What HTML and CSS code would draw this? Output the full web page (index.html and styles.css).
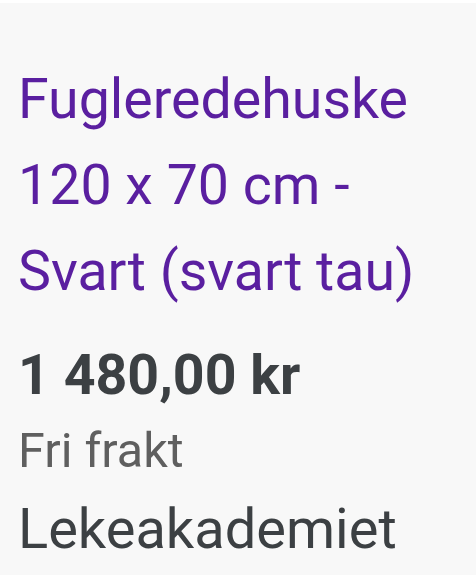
FILE: index.html
```html
<!DOCTYPE html>
<html lang="no">
<head>
  <meta charset="UTF-8" />
  <meta name="viewport" content="width=device-width, initial-scale=1.0"/>
  <title>Fugleredehuske</title>
  <link rel="stylesheet" href="styles.css">
</head>
<body>

  <div class="product-card">
    <h1 class="product-title">Fugleredehuske 120 x 70 cm - Svart (svart tau)</h1>
    <div class="product-price">1 480,00 kr</div>
    <div class="product-shipping">Fri frakt</div>
    <div class="product-seller">Lekeakademiet</div>
  </div>

</body>
</html>
```

FILE: styles.css
```css
body {
  font-family: Roboto, "Noto Sans", sans-serif;
  background: #f8f8f8;
  margin: 0;
  border-top: 3px solid #ffffff;
}

.product-card {
  padding: 54px 18px 0 18px;
}

.product-title {
  margin: 0;
  font-size: 55.5px;
  font-weight: 400;
  line-height: 86px;
  color: #5a1fa0;
}

.product-price {
  margin-top: 26px;
  font-size: 55.5px;
  font-weight: 700;
  line-height: 70px;
  color: #3c4043;
}

.product-shipping {
  margin-top: 5px;
  font-size: 48.5px;
  line-height: 70px;
  color: #5f5f5f;
}

.product-seller {
  margin-top: 3px;
  font-size: 56px;
  line-height: 80px;
  color: #3c4043;
}
```
